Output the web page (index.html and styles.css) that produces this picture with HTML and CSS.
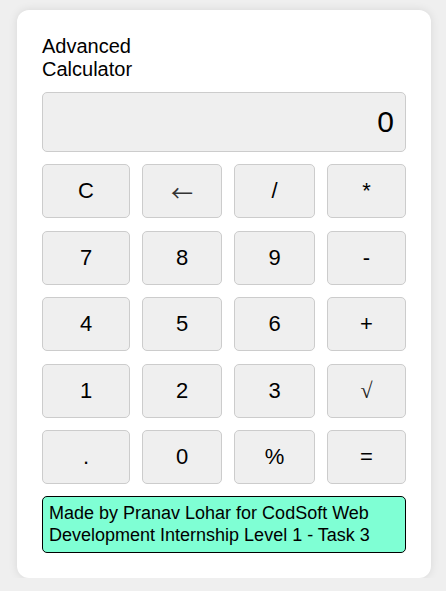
FILE: index.html
```html
<!DOCTYPE html>
<html lang="en">
<head>
<meta charset="utf-8">
<title>Advanced Calculator</title>
<link rel="stylesheet" href="styles.css">
</head>
<body>
  <main class="calculator">
    <h1 class="title">Advanced Calculator</h1>
    <div class="display">0</div>
    <div class="keys">
      <button class="key">C</button>
      <button class="key key-arrow">&larr;</button>
      <button class="key">/</button>
      <button class="key">*</button>
      <button class="key">7</button>
      <button class="key">8</button>
      <button class="key">9</button>
      <button class="key">-</button>
      <button class="key">4</button>
      <button class="key">5</button>
      <button class="key">6</button>
      <button class="key">+</button>
      <button class="key">1</button>
      <button class="key">2</button>
      <button class="key">3</button>
      <button class="key key-symbol">&radic;</button>
      <button class="key">.</button>
      <button class="key">0</button>
      <button class="key">%</button>
      <button class="key">=</button>
    </div>
    <p class="credit">Made by Pranav Lohar for CodSoft Web Development Internship Level 1 - Task 3</p>
  </main>
</body>
</html>
```
FILE: styles.css
```css
html, body {
  margin: 0;
  padding: 0;
}
body {
  background: #efefef;
  font-family: "Liberation Sans", Arial, sans-serif;
  color: #000;
  padding: 10px 15px 0 17px;
}
.calculator {
  width: 364px;
  background: #fff;
  border-radius: 12px;
  box-shadow: 0 0 10px rgba(0, 0, 0, 0.1);
  padding: 25px;
  display: flex;
  flex-direction: column;
}
.title {
  margin: 0;
  font-size: 20px;
  font-weight: normal;
  line-height: 23px;
  width: min-content;
}
.display {
  margin-top: 11px;
  height: 34px;
  padding: 12px 11px;
  background: #efefef;
  border: 1px solid #cccccc;
  border-radius: 5px;
  font-size: 30px;
  line-height: 34px;
  text-align: right;
}
.keys {
  margin-top: 12px;
  display: grid;
  grid-template-columns: 88px 80px 81px 79px;
  grid-auto-rows: 54px;
  column-gap: 12px;
  row-gap: 12.5px;
}
.key {
  margin: 0;
  padding: 0;
  background: #efefef;
  border: 1px solid #cccccc;
  border-radius: 5px;
  font-family: "Liberation Sans", Arial, sans-serif;
  font-size: 22px;
  color: #000;
}
.key-arrow {
  font-family: "Noto Sans CJK JP", sans-serif;
  font-size: 22px;
  color: #333;
}
.key-symbol {
  font-family: "Liberation Serif", "DejaVu Serif", serif;
  color: #222;
}
.credit {
  margin: 12px 0 0;
  padding: 6px;
  background: #7fffd4;
  border: 1px solid #000;
  border-radius: 5px;
  font-size: 18px;
  line-height: 21.5px;
}
```
